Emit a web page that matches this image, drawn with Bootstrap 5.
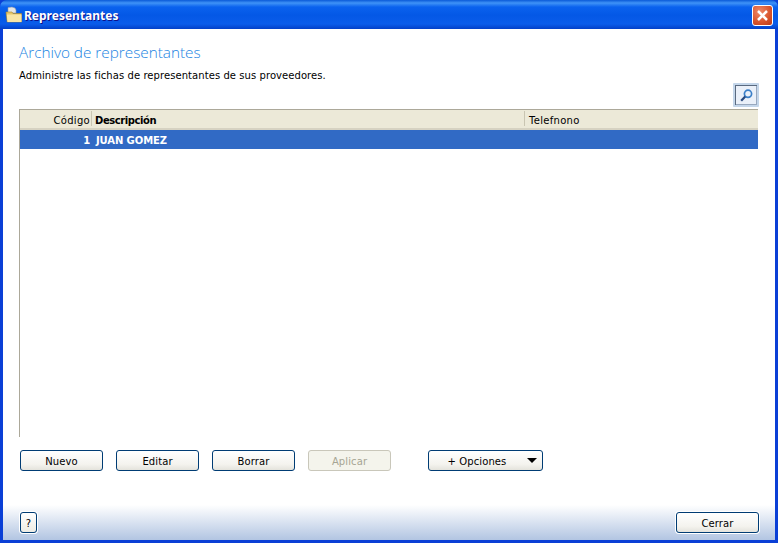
<!DOCTYPE html>
<html lang="es"><head><meta charset="utf-8"><title>Representantes</title>
<link href="https://cdn.jsdelivr.net/npm/bootstrap@5.3.0/dist/css/bootstrap.min.css" rel="stylesheet">
<style>
html,body{margin:0;height:543px;overflow:hidden}
body{font-family:"DejaVu Sans",sans-serif;font-size:10px;color:#000;background:#0831d9}
.xpwin{width:778px;height:543px;background:#0a3fd6;padding:0 3px 3px 3px}
.xptitle{height:29px;margin:0 -3px;padding:0 3px 0 5px;background:linear-gradient(180deg,#0a5ad8 0,#3f93f7 3px,#0a62ee 7px,#0458e6 15px,#0a5cea 24px,#0340c8 29px);border-radius:7px 7px 0 0}
.xptitle-text{font:700 12px "Noto Sans",sans-serif;color:#fff;text-shadow:1px 1px 0 #0f1089;margin-left:1px;padding-top:2px}
.xpclose{width:21px;height:21px;margin-right:2px;margin-top:1px;background:radial-gradient(circle at 35% 30%,#ef8a6a,#d8532b 60%,#b93a17);border:1px solid #fff;border-radius:3px;padding:0}
.xpbody{height:511px;background:linear-gradient(180deg,#fff 0,#fff 476px,#b2c5e2 511px);padding:0 17px 0 16px}
.pagehead{font:300 15.3px "Open Sans",sans-serif;color:#1a84e2;line-height:20px;padding-top:13px;height:33px}
.pagesub{line-height:14px;margin-top:7px;height:14px;letter-spacing:.07px;font-size:10px}
.searchrow{height:24px;margin-top:0;margin-right:-1px}
.searchbtn{width:26px;height:24px;padding:0;background:#eaf0f9;border:2px solid #c4d6ea;border-radius:1px;box-shadow:inset 1px 1px 0 #5a6a80,inset -1px -1px 0 #98a8be}
.gridbox{height:328px;margin-top:2px;border-left:1px solid #aca899;width:739px}
.gridhead{height:21px;background:#ece9d8;border-top:1px solid #aca899;border-bottom:2px solid #d6d2c2;letter-spacing:.3px}
.gridrow{height:19px;background:#316ac5;color:#fff;font-weight:700;line-height:21px;letter-spacing:-.1px}
.c1{width:72px;text-align:right}
.c1txt{padding-right:2px}
.c2{width:433px;padding-left:3px}
.gridrow .c2{padding-left:4px}
.c3{flex:1;padding-left:4px;line-height:21px}
.sep{border-right:1px solid #c9c5b2;height:15px;margin-top:1px;line-height:19px}
.c1 .sep{padding-right:1px}
.boldhead{font-weight:700;letter-spacing:-.42px}
.actionrow{margin-top:13px;padding-left:1px;height:21px}
.xpbtn{width:83px;height:21px;padding:3px 0 0;font-size:10px;line-height:16px;color:#000;background:linear-gradient(180deg,#fff 0,#f4f3ee 70%,#e4e3dc 100%);border:1px solid #003c74;border-radius:3px;font-family:inherit;letter-spacing:.1px}
.xpbtn.xpdis{color:#a6a594;background:#f4f4ec;border-color:#c9c7ba;opacity:1}
.xpbtn.xpwide{width:115px;margin-left:37px;position:relative;padding-right:17px}
.caretmark{position:absolute;right:5px;top:7px;width:0;height:0;border-left:5px solid transparent;border-right:5px solid transparent;border-top:5px solid #000}
.footrow{margin-top:41px;padding:0 0 0 1px;margin-right:-1px}
.helpbtn{width:17px;height:21px;padding:3px 0 0;font-size:10px;color:#000;background:linear-gradient(180deg,#fff,#eeece4);border:1px solid #003c74;border-radius:3px;font-family:inherit;line-height:16px}
.halo{box-shadow:0 0 0 1px #fff}
.gapbtn{margin-left:13px}
</style></head><body>
<div class="xpwin">
 <div class="xptitle d-flex align-items-center">
  <svg width="18" height="18" viewBox="0 0 18 18"><path d="M3 1.500l4-.5 3 1 1 2v3H3z" fill="#e6e6e6" stroke="#8f9aa8" stroke-width=".6"/><path d="M1 6h6l1 1.500h8.500V16H2.200z" fill="#e9c768" stroke="#a9862f" stroke-width=".6"/><path d="M1.800 8.500h14.700V16H2.500z" fill="#f9e5a6"/></svg>
  <span class="xptitle-text flex-grow-1">Representantes</span>
  <button class="xpclose d-flex align-items-center justify-content-center" aria-label="Cerrar"><svg width="13" height="13" viewBox="0 0 13 13"><path d="M2 2l9 9M11 2l-9 9" stroke="#fff" stroke-width="2.500"/></svg></button>
 </div>
 <div class="xpbody">
  <div class="pagehead">Archivo de representantes</div>
  <div class="pagesub">Administre las fichas de representantes de sus proveedores.</div>
  <div class="searchrow d-flex justify-content-end">
   <button class="searchbtn d-flex align-items-center justify-content-center" aria-label="Buscar"><svg width="15" height="15" viewBox="0 0 15 15"><circle cx="9" cy="5.800" r="3.600" fill="none" stroke="#3a7fc8" stroke-width="1.700"/><path d="M6.200 8.600L2.200 12.800" stroke="#27497f" stroke-width="2.200"/></svg></button>
  </div>
  <div class="gridbox">
   <div class="gridhead d-flex">
    <div class="c1"><div class="sep">Código</div></div>
    <div class="c2 boldhead"><div class="sep">Descripción</div></div>
    <div class="c3">Telefnono</div>
   </div>
   <div class="gridrow d-flex"><div class="c1 c1txt">1</div><div class="c2">JUAN GOMEZ</div><div class="c3"></div></div>
  </div>
  <div class="actionrow d-flex">
   <button class="xpbtn">Nuevo</button>
   <button class="xpbtn gapbtn">Editar</button>
   <button class="xpbtn gapbtn">Borrar</button>
   <button class="xpbtn xpdis gapbtn" disabled>Aplicar</button>
   <button class="xpbtn xpwide">+ Opciones<span class="caretmark"></span></button>
  </div>
  <div class="footrow d-flex justify-content-between">
   <button class="helpbtn halo">?</button>
   <button class="xpbtn halo">Cerrar</button>
  </div>
 </div>
</div>
</body></html>
